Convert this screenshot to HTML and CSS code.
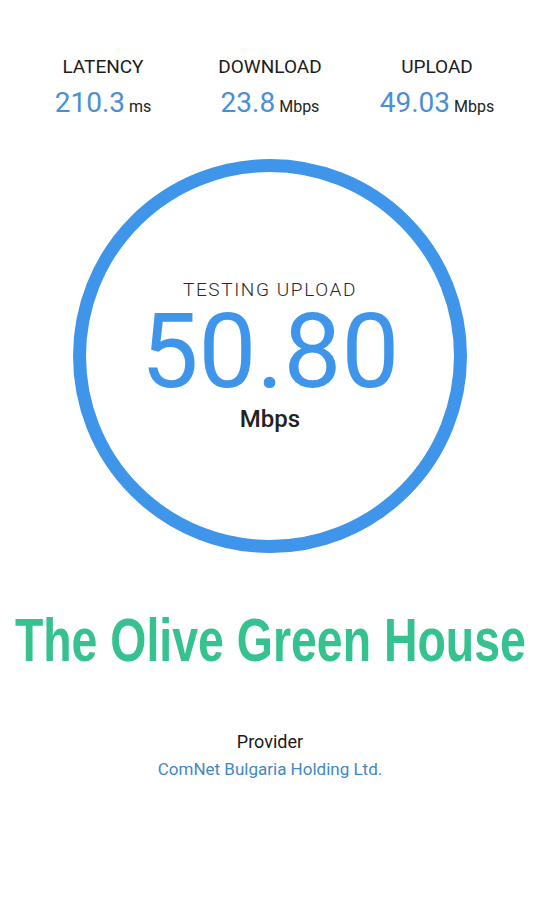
FILE: index.html
```html
<!DOCTYPE html>
<html lang="en">
<head>
<meta charset="utf-8">
<title>Speed Test</title>
<link rel="stylesheet" href="styles.css">
</head>
<body>
<main class="screen">
  <section class="stats">
    <div class="stat">
      <div class="stat-label">LATENCY</div>
      <div class="stat-value"><span class="num">210.3</span> <span class="unit">ms</span></div>
    </div>
    <div class="stat">
      <div class="stat-label">DOWNLOAD</div>
      <div class="stat-value"><span class="num">23.8</span> <span class="unit">Mbps</span></div>
    </div>
    <div class="stat">
      <div class="stat-label">UPLOAD</div>
      <div class="stat-value"><span class="num">49.03</span> <span class="unit">Mbps</span></div>
    </div>
  </section>

  <section class="gauge">
    <div class="gauge-title">TESTING UPLOAD</div>
    <div class="gauge-value">50.80</div>
    <div class="gauge-unit">Mbps</div>
  </section>

  <div class="banner"><span class="banner-text">The Olive Green House</span></div>

  <section class="provider">
    <div class="provider-label">Provider</div>
    <div class="provider-name">ComNet Bulgaria Holding Ltd.</div>
  </section>
</main>
</body>
</html>
```
FILE: styles.css
```css
html, body {
  margin: 0;
  padding: 0;
  background: #ffffff;
}

body {
  font-family: Roboto, "Noto Sans", "Liberation Sans", sans-serif;
  color: #1f1f1f;
}

.screen {
  width: 540px;
  height: 900px;
  overflow: hidden;
  display: flex;
  flex-direction: column;
  align-items: center;
}

.stats {
  display: grid;
  grid-template-columns: repeat(3, 167px);
  padding-top: 56px;
}

.stat {
  display: flex;
  flex-direction: column;
  align-items: center;
}

.stat-label {
  font-size: 19px;
  line-height: 22px;
  color: #1c1c1c;
}

.stat-value {
  margin-top: 8px;
  line-height: 34px;
  white-space: nowrap;
}

.stat-value .num {
  font-size: 28px;
  color: #4a8fd6;
}

.stat-value .unit {
  font-size: 16px;
  color: #222222;
}

.gauge {
  box-sizing: border-box;
  width: 394px;
  height: 394px;
  margin-top: 35px;
  border: 13px solid #3e95ea;
  border-radius: 50%;
  display: flex;
  flex-direction: column;
  align-items: center;
  padding-top: 107px;
}

.gauge-title {
  font-size: 19px;
  line-height: 22px;
  font-weight: 300;
  letter-spacing: 1.6px;
  color: #2a2a2a;
}

.gauge-value {
  font-size: 103px;
  line-height: 102px;
  color: #3e95ea;
}

.gauge-unit {
  margin-top: 2px;
  font-size: 24px;
  line-height: 28px;
  font-weight: 500;
  color: #222222;
}

.banner {
  width: 540px;
  margin-top: 56px;
  display: flex;
  justify-content: center;
  white-space: nowrap;
}

.banner-text {
  display: inline-block;
  font-family: "Liberation Sans", Arial, sans-serif;
  font-weight: bold;
  font-size: 61.5px;
  line-height: 61.5px;
  color: #35c28f;
  transform: scaleX(0.755);
}

.provider {
  margin-top: 60px;
  display: flex;
  flex-direction: column;
  align-items: center;
}

.provider-label {
  font-size: 18px;
  line-height: 22px;
  color: #1a1a1a;
}

.provider-name {
  margin-top: 5px;
  font-size: 17px;
  line-height: 22px;
  color: #3f88c5;
}
```
